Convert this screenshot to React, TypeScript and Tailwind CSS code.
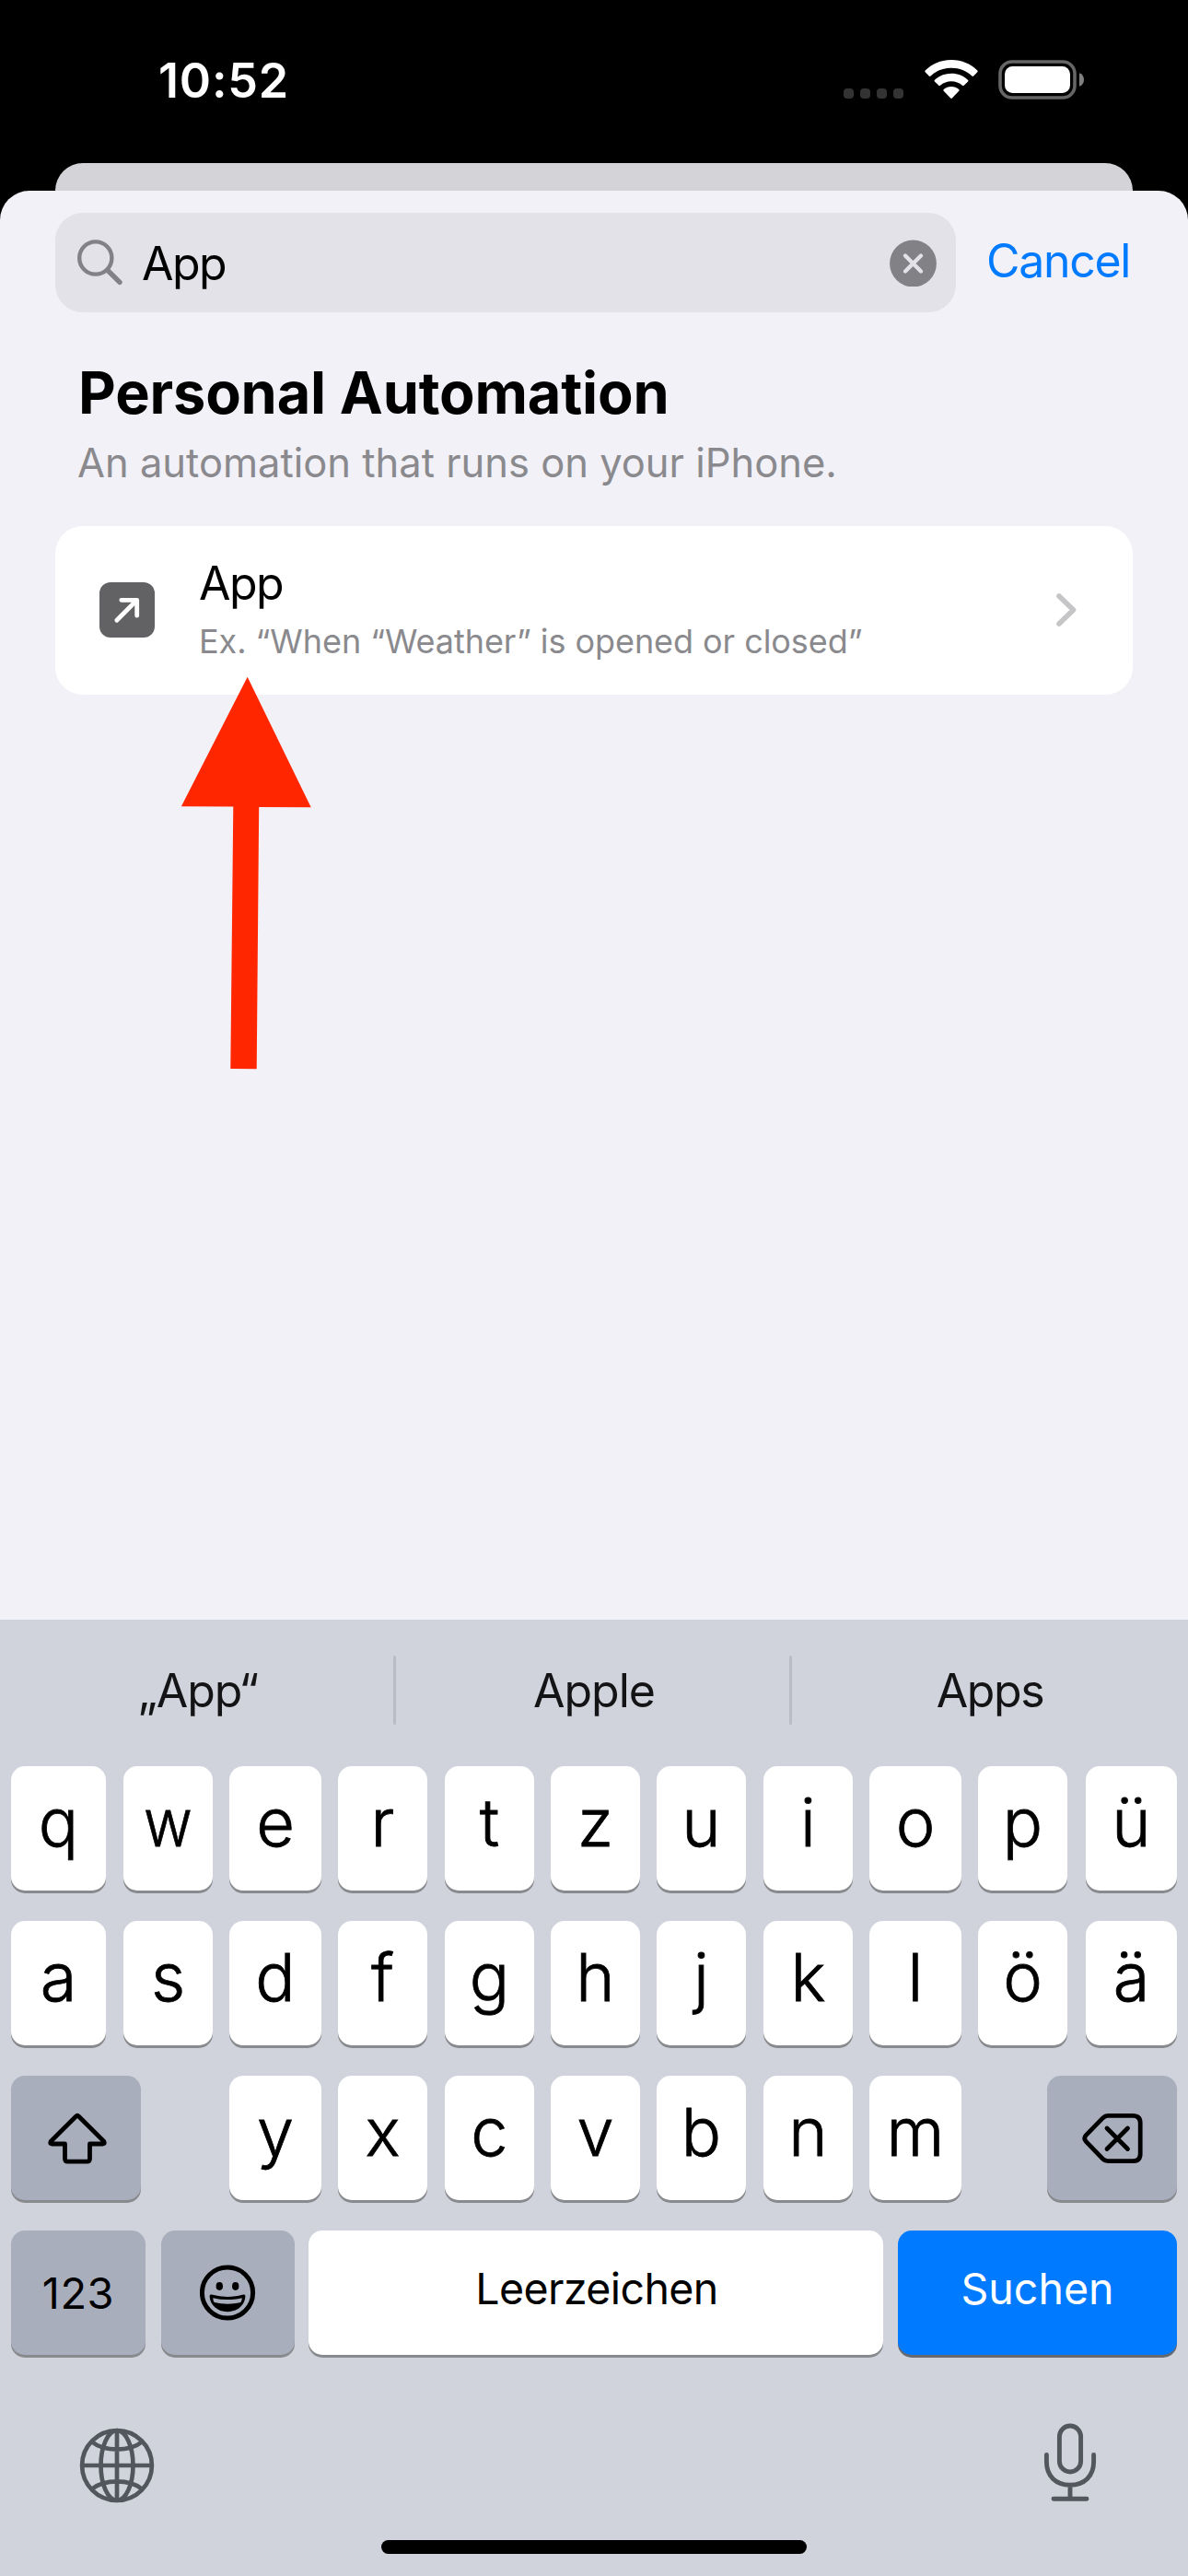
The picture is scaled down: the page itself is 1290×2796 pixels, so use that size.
import React from "react";

const ROW_1 = ["q", "w", "e", "r", "t", "z", "u", "i", "o", "p", "ü"];
const ROW_2 = ["a", "s", "d", "f", "g", "h", "j", "k", "l", "ö", "ä"];

const ROW_WIDTHS = [
  "w-[103px]",
  "w-[97px]",
  "w-[100px]",
  "w-[97px]",
  "w-[97px]",
  "w-[97px]",
  "w-[97px]",
  "w-[97px]",
  "w-[100px]",
  "w-[97px]",
  "w-[99px]",
];

const KEY_BASE = "flex h-[135px] items-center justify-center rounded-[15px] shadow-[0_3px_0_#898a8d]";

function LetterKey({ letter, width }: { letter: string; width: string }) {
  return (
    <div
      className={`${KEY_BASE} ${width} bg-white pb-[13px] text-[72px] font-light leading-none text-black [-webkit-text-stroke:0.8px_#000]`}
    >
      <span className={letter === "w" ? "scale-x-90" : ""}>{letter}</span>
    </div>
  );
}

function LetterRow({ letters }: { letters: string[] }) {
  return (
    <div className="grid grid-cols-[122px_115px_118px_116px_115px_115px_116px_115px_118px_117px_99px] pl-3">
      {letters.map((letter, i) => (
        <LetterKey key={letter} letter={letter} width={ROW_WIDTHS[i]} />
      ))}
    </div>
  );
}

function WifiIcon() {
  return (
    <svg className="mt-[65px] ml-[23px] h-[43px] w-[58px]" viewBox="0 0 58 43" fill="#fff">
      <path d="M29 0C40.500 0 50.500 4.600 57.300 11.600Q58 12.400 57.300 13.200L53.200 17.500Q52.400 18.300 51.500 17.500C45.500 11.900 37.700 8.800 29 8.800S12.500 11.900 6.500 17.500Q5.600 18.300 4.800 17.500L.700 13.200Q0 12.400.700 11.600C7.500 4.600 17.500 0 29 0Z" />
      <path d="M29 14.700c7 0 13.300 2.600 18 7q.900.800.100 1.700l-4.400 4.300q-.800.800-1.700 0c-3.300-2.900-7.500-4.500-12-4.500s-8.700 1.600-12 4.500q-.900.800-1.700 0l-4.400-4.300q-.800-.900.100-1.700c4.700-4.400 11-7 18-7Z" />
      <path d="M29 29c3.200 0 6.100 1.100 8.200 3.100q.900.800.1 1.700l-7.500 7.700q-.8.800-1.600 0l-7.500-7.700q-.8-.9.1-1.700C22.900 30.100 25.800 29 29 29Z" />
    </svg>
  );
}

function BatteryIcon() {
  return (
    <svg className="mt-[65px] ml-[22px] h-[43px] w-[94px]" viewBox="0 0 94 43">
      <rect x="2" y="2" width="81" height="39" rx="13" fill="none" stroke="#666" strokeWidth="3.600" />
      <rect x="7" y="7" width="71" height="29" rx="8.500" fill="#fff" />
      <path d="M88 14.200c3.200 1 5 3.900 5 7.300s-1.800 6.300-5 7.300Z" fill="#808080" />
    </svg>
  );
}

function StatusBar() {
  return (
    <header className="flex h-[177px] items-start justify-between bg-black pr-[112px] pl-[172px]">
      <span className="text-[52px] font-semibold leading-[176px] tracking-[0.800px] text-white">10:52</span>
      <div className="flex items-start">
        <div className="mt-24 flex gap-[7px]">
          {[0, 1, 2, 3].map((i) => (
            <span key={i} className="h-[11px] w-[11px] rounded-[4px] bg-[#333333]" />
          ))}
        </div>
        <WifiIcon />
        <BatteryIcon />
      </div>
    </header>
  );
}

function SearchBar() {
  return (
    <div className="flex h-[108px] items-center">
      <div className="flex h-full w-[978px] items-center rounded-[30px] bg-[#e3e2e8] pr-[21px] pl-6">
        <svg className="h-[50px] w-[50px]" viewBox="0 0 50 50" fill="none" stroke="#828186">
          <circle cx="19.800" cy="20" r="17.600" strokeWidth="4.400" />
          <path d="M33 33.500 46 46.300" strokeWidth="5.400" strokeLinecap="round" />
        </svg>
        <span className="ml-5 flex-1 pt-[2px] text-[50px] leading-[60px] tracking-[-1.500px] text-black">App</span>
        <svg className="h-[51px] w-[51px]" viewBox="0 0 51 51">
          <circle cx="25.500" cy="26" r="25.400" fill="#828186" />
          <path d="m17 17.500 17 17m0-17-17 17" stroke="#e3e2e8" strokeWidth="4.400" strokeLinecap="round" />
        </svg>
      </div>
      <span className="ml-[33px] pb-[5px] text-[50px] leading-[60px] tracking-[-1.300px] text-[#007aff]">Cancel</span>
    </div>
  );
}

function ResultRow() {
  return (
    <div className="mt-[43px] flex h-[183px] items-center rounded-[30px] bg-white pr-[61px] pl-12">
      <svg className="mb-px h-[60px] w-[60px]" viewBox="0 0 60 60">
        <rect width="60" height="60" rx="12" fill="#626264" />
        <path
          d="M18.800 41.200 40.500 19.500M23.800 19.300H40.700V36.200"
          fill="none"
          stroke="#fff"
          strokeWidth="4.800"
          strokeLinecap="round"
          strokeLinejoin="round"
        />
      </svg>
      <div className="ml-12 flex-1 pb-1">
        <div className="text-[50px] leading-[60px] tracking-[-1.500px] text-black">App</div>
        <div className="mt-[11px] text-[36px] leading-[44px] tracking-[-0.060px] text-[#8a8a8e]">
          Ex. “When “Weather” is opened or closed”
        </div>
      </div>
      <svg className="mb-px h-9 w-[22px]" viewBox="0 0 22 36" fill="none">
        <path d="m3 3 15.500 15L3 33" stroke="#c5c5c7" strokeWidth="5.600" strokeLinecap="round" strokeLinejoin="round" />
      </svg>
    </div>
  );
}

function PointerArrow() {
  return (
    <svg className="absolute top-[734px] left-[196px] h-[428px] w-[144px]" viewBox="0 0 144 428">
      <path d="M72.700.700 141.700 142.300 85.200 141.900 82.700 426.300 54.300 426 57.300 141.600.900 141.200Z" fill="#ff2600" />
    </svg>
  );
}

function Suggestions() {
  return (
    <div className="flex h-[153px] items-center text-[50px] leading-[60px] text-[#141416]">
      <span className="w-[427px] pl-[3px] text-center tracking-[-1px]">„App“</span>
      <span className="h-[75px] w-[3px] rounded-full bg-[#b9bcc4]" />
      <span className="w-[427px] pl-[3px] text-center tracking-[-1px]">Apple</span>
      <span className="h-[75px] w-[3px] rounded-full bg-[#b9bcc4]" />
      <span className="flex-1 text-center tracking-[-1.400px]">Apps</span>
    </div>
  );
}

function ShiftIcon() {
  return (
    <svg className="ml-[2px] h-[56px] w-[66px]" viewBox="0 0 66 56" fill="none" stroke="#000" strokeWidth="4.800" strokeLinejoin="round">
      <path d="M31.600 4Q33 2.400 34.400 4L61.800 31.200Q63.500 34 60.500 34H46.500V50Q46.500 53.200 43.300 53.200H22.700Q19.500 53.200 19.500 50V34H5.500Q2.500 34 4.200 31.200Z" />
    </svg>
  );
}

function DeleteIcon() {
  return (
    <svg
      className="ml-px h-[56px] w-[66px]"
      viewBox="0 0 66 56"
      fill="none"
      stroke="#000"
      strokeWidth="4.800"
      strokeLinejoin="round"
      strokeLinecap="round"
    >
      <path d="M28 3.300H55Q63.200 3.300 63.200 11.300V44.700Q63.200 52.700 55 52.700H28Q25 52.700 22.500 50.200L4.200 31.300Q1.200 28 4.200 24.700L22.500 5.800Q25 3.300 28 3.300Z" />
      <path d="m27 17 22.500 22.500m0-22.500-22.500 22.500" />
    </svg>
  );
}

function EmojiIcon() {
  return (
    <svg className="h-[61px] w-[61px]" viewBox="0 0 61 61">
      <circle cx="30" cy="30.500" r="27.600" fill="none" stroke="#000" strokeWidth="5" />
      <ellipse cx="21.300" cy="23.500" rx="3.700" ry="4.400" />
      <ellipse cx="38.700" cy="23.500" rx="3.700" ry="4.400" />
      <path d="M12.700 32.600Q30 37.200 47.300 32.600Q49.400 32.100 49.400 34.300C49 44 41 51.200 30 51.200S11 44 10.600 34.300Q10.600 32.100 12.700 32.600Z" />
      <path d="M14.300 36.200Q30 39.900 45.700 36.200Q45.900 38.400 44.300 41Q30 44.300 15.700 41Q14.100 38.400 14.300 36.200Z" fill="#a9aebd" />
    </svg>
  );
}

function GlobeIcon() {
  return (
    <svg className="h-[82px] w-[82px]" viewBox="0 0 82 82" fill="none" stroke="#52565d" strokeWidth="4.700">
      <circle cx="41" cy="41" r="37.900" />
      <ellipse cx="41" cy="41" rx="17.500" ry="37.900" />
      <path d="M41 3V79M3 41H79M14 15.500C21 21.200 30.500 23.600 41 23.600S61 21.200 68 15.500M14 66.500C21 60.800 30.500 58.400 41 58.400S61 60.800 68 66.500" />
    </svg>
  );
}

function MicIcon() {
  return (
    <svg className="h-[86px] w-[58px]" viewBox="0 0 58 86" fill="none" stroke="#52565d" strokeWidth="4.900" strokeLinecap="round">
      <rect x="17.400" y="3" width="23.200" height="50" rx="11.600" />
      <path d="M3.400 34.500V42C3.400 57.500 13.500 67.200 29 67.200S54.600 57.500 54.600 42V34.500M29 67.500V82M11 82.300H47" />
    </svg>
  );
}

function Keyboard() {
  return (
    <section className="flex h-[1038px] flex-col bg-[#d0d3db]">
      <Suggestions />
      <div className="mt-[6px] flex flex-col gap-[33px]">
        <LetterRow letters={ROW_1} />
        <LetterRow letters={ROW_2} />
        <div className="flex pl-3">
          <div className={`${KEY_BASE} mr-24 w-[141px] bg-[#a9aebd]`}>
            <ShiftIcon />
          </div>
          <div className="grid grid-cols-[118px_116px_115px_115px_116px_115px_100px]">
            {["y", "x", "c", "v", "b", "n", "m"].map((letter, i) => (
              <LetterKey key={letter} letter={letter} width={ROW_WIDTHS[i + 2]} />
            ))}
          </div>
          <div className={`${KEY_BASE} ml-[93px] w-[141px] bg-[#a9aebd]`}>
            <DeleteIcon />
          </div>
        </div>
        <div className="flex pl-3 text-[46.500px] leading-none">
          <div className={`${KEY_BASE} mr-[17px] w-[146px] bg-[#a9aebd] pb-px text-[47px] tracking-[0.500px]`}>123</div>
          <div className={`${KEY_BASE} mr-[15px] w-[145px] bg-[#a9aebd]`}>
            <EmojiIcon />
          </div>
          <div className={`${KEY_BASE} mr-4 w-[624px] bg-white pb-[9px] pl-[2px] tracking-[-0.600px]`}>Leerzeichen</div>
          <div className="flex h-[135px] w-[303px] items-center justify-center rounded-[15px] bg-[#007aff] pb-[9px] text-white shadow-[0_3px_0_#66696f]">
            Suchen
          </div>
        </div>
      </div>
      <div className="mt-[74px] flex items-start justify-between pr-[99px] pl-[86px]">
        <div className="pt-[5px]">
          <GlobeIcon />
        </div>
        <MicIcon />
      </div>
      <div className="mx-auto mt-[40px] h-[15px] w-[462px] rounded-full bg-black" />
    </section>
  );
}

export default function App() {
  return (
    <div className="relative h-[2796px] w-[1290px] overflow-hidden bg-black font-['Inter',sans-serif]">
      <StatusBar />
      <div className="mx-[60px] h-[30px] rounded-t-[30px] bg-[#d4d3d8]" />
      <main className="h-[1551px] rounded-t-[32px] bg-[#f2f1f7] px-[60px] pt-6">
        <SearchBar />
        <h1 className="mt-[49px] ml-[25px] text-[63px] font-bold leading-[76px] tracking-[-0.160px] text-black">
          Personal Automation
        </h1>
        <p className="mt-3 ml-6 text-[43.500px] leading-[52px] text-[#8a8a8e]">
          An automation that runs on your iPhone.
        </p>
        <ResultRow />
      </main>
      <Keyboard />
      <PointerArrow />
    </div>
  );
}
